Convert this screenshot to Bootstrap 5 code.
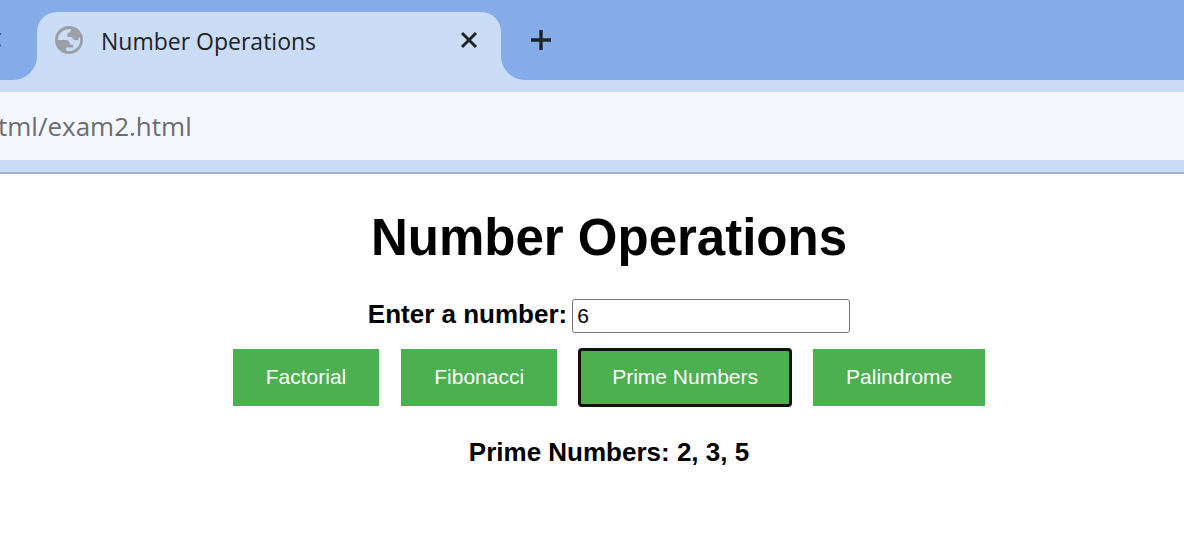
<!DOCTYPE html>
<html lang="en">
<head>
<meta charset="utf-8">
<meta name="viewport" content="width=device-width, initial-scale=1">
<title>Number Operations</title>
<link href="https://cdn.jsdelivr.net/npm/bootstrap@5.3.0/dist/css/bootstrap.min.css" rel="stylesheet">
<style>
  body { font-family: "Liberation Sans", Arial, sans-serif; color: #000; background: #fff; }
  .browser { font-family: "Open Sans", sans-serif; background: #cbdcf6; border-bottom: 2px solid #a5b0cb; }
  .tab-strip { height: 80px; background: #cbdcf6; }
  .strip-start { width: 37px; background: #85ace9; border-bottom-right-radius: 24px; }
  .strip-end { background: #85ace9; border-bottom-left-radius: 24px; padding-left: 27px; }
  .strip-top { background: #85ace9; width: 464px; padding-top: 12px; }
  .active-tab { height: 68px; background: #cbdcf6; border-radius: 20px 20px 0 0; padding: 0 20px 12px 18px; }
  .tab-title { font-size: 23px; line-height: 32px; color: #202328; margin-left: 18px; padding-top: 2px; }
  .bare { border: 0; background: none; padding: 0; display: flex; }
  .address { height: 68px; margin: 12px 0; background: #f4f7fc; }
  .address input { font-size: 26px; line-height: 36px; color: #6a6d72; border: 0; background: none; outline: 0; padding: 0; text-indent: -2px; }
  .page { padding: 34px 0 0 34px; }
  .page h1 { font-size: 51px; line-height: 60px; font-weight: 700; margin-bottom: 31px; }
  .number-row { gap: 5px; }
  .strong-text { font-size: 26px; line-height: 30px; font-weight: 700; }
  .number-box { width: 278px; height: 34px; font-size: 21px; line-height: 24px; padding: 2px 4px; border: 1px solid #767676; border-radius: 3px; color: #000; }
  .ops { gap: 22px; margin: 16px 0 31px; }
  .op { --bs-btn-font-size: 21px; --bs-btn-line-height: 25px; --bs-btn-border-width: 0; --bs-btn-border-radius: 0; --bs-btn-color: #fff; --bs-btn-bg: #4caf50; --bs-btn-hover-color: #fff; --bs-btn-hover-bg: #43a047; padding: 15px 33px 17px; }
  .op.current { border-radius: 3px; outline: 3px solid #101010; outline-offset: -2px; }
</style>
</head>
<body>
<header class="browser overflow-hidden">
  <div class="tab-strip d-flex">
    <div class="strip-start d-flex align-items-center flex-shrink-0">
      <svg width="2" height="80" viewBox="0 0 2 80" aria-hidden="true"><path d="M0 34h1M0 45.500h1" stroke="#4b5872" stroke-width="2"/></svg>
    </div>
    <div class="strip-top flex-shrink-0">
      <div class="active-tab d-flex align-items-center">
        <svg width="28" height="28" viewBox="0 0 28 28" aria-hidden="true">
          <circle cx="14" cy="14" r="14" fill="#9aa0a6"/>
          <path d="M16 2.900C8.500 2.500 2.800 7.800 2.800 14H9.500C13.500 14 15 15.700 15 18.700H18.300V21.500H11.200V24.800C18.500 26.700 25.300 21 25.300 14C25.300 12.800 25 11.600 24.600 10.700C23.300 12.500 24 14.300 21.500 14.300C18.500 14.300 17.500 13.300 17.300 11H12.500V8C12.500 6.500 16 7 16 2.900Z" fill="#cbdcf6"/>
        </svg>
        <span class="tab-title">Number Operations</span>
        <button class="bare ms-auto" type="button" aria-label="Close tab">
          <svg width="24" height="24" viewBox="0 0 24 24"><path d="M5 5L19 19M19 5L5 19" stroke="#202328" stroke-width="3"/></svg>
        </button>
      </div>
    </div>
    <div class="strip-end flex-grow-1 d-flex align-items-center">
      <button class="bare" type="button" aria-label="New tab">
        <svg width="26" height="26" viewBox="0 0 26 26"><path d="M13 3V23M3 13H23" stroke="#202328" stroke-width="3.400"/></svg>
      </button>
    </div>
  </div>
  <div class="address d-flex align-items-center">
    <input class="w-100" type="text" aria-label="Address" value="tml/exam2.html">
  </div>
</header>
<main class="page text-center">
  <h1>Number Operations</h1>
  <div class="number-row d-flex justify-content-center align-items-start">
    <label class="strong-text" for="number">Enter a number:</label>
    <input class="number-box" id="number" type="text" inputmode="numeric" value="6">
  </div>
  <div class="ops d-flex justify-content-center">
    <button class="btn op" type="button">Factorial</button>
    <button class="btn op" type="button">Fibonacci</button>
    <button class="btn op current" type="button">Prime Numbers</button>
    <button class="btn op" type="button">Palindrome</button>
  </div>
  <p class="strong-text">Prime Numbers: 2, 3, 5</p>
</main>
<script src="https://cdn.jsdelivr.net/npm/bootstrap@5.3.0/dist/js/bootstrap.bundle.min.js"></script>
</body>
</html>
